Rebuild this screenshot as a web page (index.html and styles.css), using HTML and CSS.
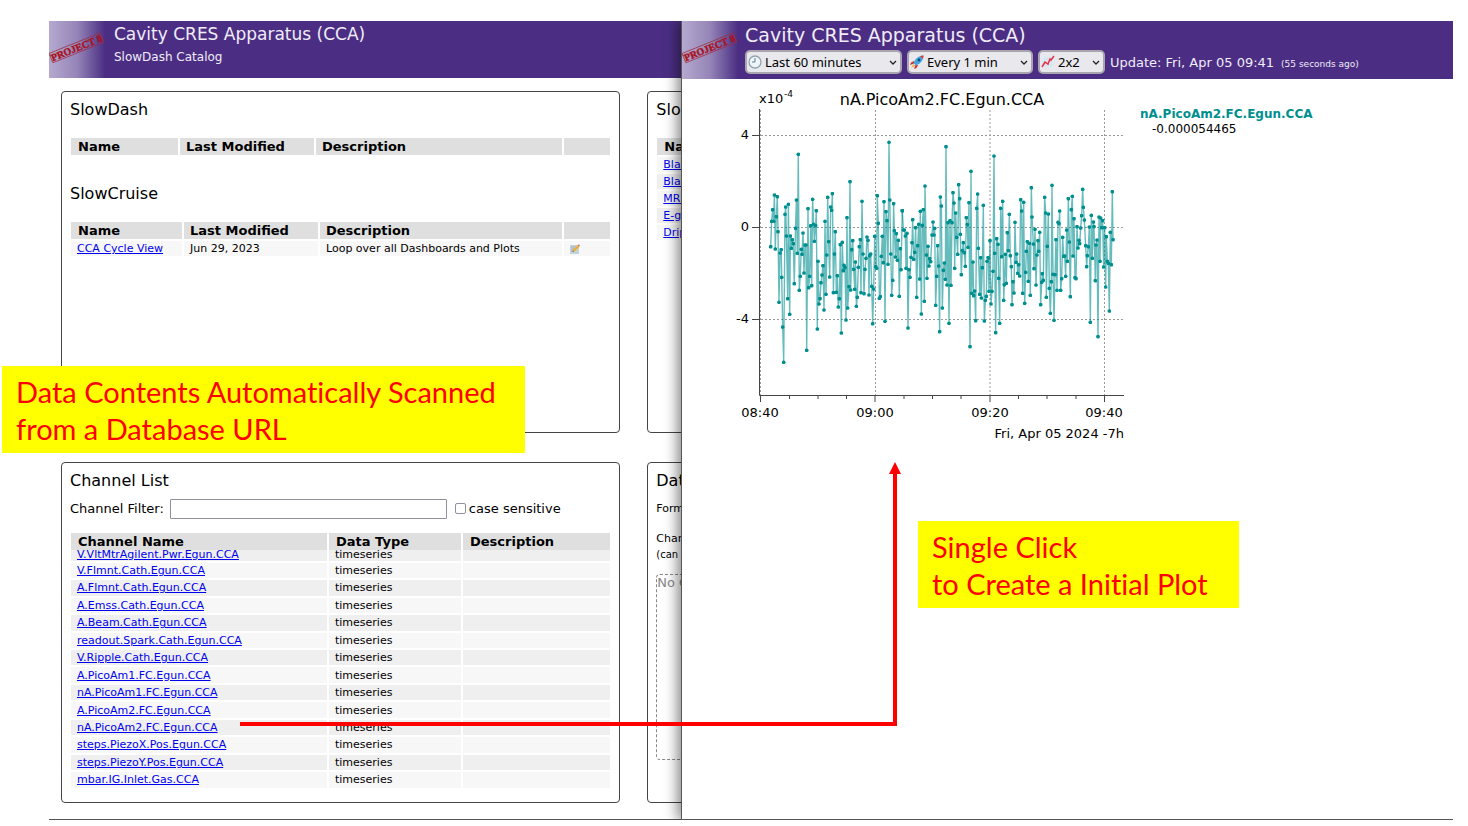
FILE: index.html
```html
<!DOCTYPE html>
<html lang="en">
<head>
<meta charset="utf-8">
<title>SlowDash</title>
<link rel="stylesheet" href="styles.css">
</head>
<body>
<svg class="defs" aria-hidden="true">
  <defs>
    <symbol id="stamp" viewBox="0 0 56 56">
      <g transform="rotate(-22 27 27)">
        <rect x="0" y="22" width="55" height="10" fill="none" stroke="#a02c3c" stroke-width=".7"/>
        <text x="27.500" y="30.500" text-anchor="middle" font-family="Liberation Serif, serif" font-weight="700" font-size="10" fill="#a8121c" stroke="#a8121c" stroke-width=".4">PROJECT 8</text>
      </g>
    </symbol>
    <marker id="dot" viewBox="-2 -2 4 4" markerWidth="2.800" markerHeight="2.800"><circle r="1.900" fill="#008f8f"/></marker>
  </defs>
</svg>
<main class="stage">
  <section class="window catalog">
    <header class="bar">
      <div class="logo"><svg><use href="#stamp"/></svg></div>
      <div class="bar-text">
        <h1 class="title">Cavity CRES Apparatus (CCA)</h1>
        <p class="subtitle">SlowDash Catalog</p>
      </div>
    </header>
    <div class="panels">
      <section class="panel">
        <h2>SlowDash</h2>
        <table class="list dash">
          <thead><tr><th class="c1">Name</th><th class="c2">Last Modified</th><th>Description</th><th class="c4"></th></tr></thead>
        </table>
        <h2 class="second">SlowCruise</h2>
        <table class="list cruise">
          <thead><tr><th class="c1">Name</th><th class="c2">Last Modified</th><th>Description</th><th class="c4"></th></tr></thead>
          <tbody><tr><td><a href="#">CCA Cycle View</a></td><td>Jun 29, 2023</td><td>Loop over all Dashboards and Plots</td><td>
            <svg class="memo" viewBox="0 0 10 10"><path d="M0 1h9v9H0z" fill="#c3d3dc"/><path d="M1 3h5M1 5h4M1 7h3" stroke="#8fa5b3" stroke-width=".7"/><path d="M2.500 8l.7-2.400L7.600 1.200l1.800 1.600L4.800 7.300z" fill="#eeb02e"/><path d="M7.600 1.200L8.600.2l1.400 1.400-.9 1z" fill="#e0637a"/><path d="M2.500 8l.5-1.400.9.8z" fill="#444"/></svg>
          </td></tr></tbody>
        </table>
      </section>
      <section class="panel">
        <h2>SlowPlot</h2>
        <table class="list">
          <thead><tr><th>Name</th></tr></thead>
          <tbody>
            <tr><td><a href="#">Blank</a></td></tr>
            <tr><td><a href="#">Blank</a></td></tr>
            <tr><td><a href="#">MRI</a></td></tr>
            <tr><td><a href="#">E-gun</a></td></tr>
            <tr><td><a href="#">Drip</a></td></tr>
          </tbody>
        </table>
      </section>
      <section class="panel">
        <h2>Channel List</h2>
        <div class="filter">
          <label for="filter">Channel Filter:</label>
          <input id="filter" type="text">
          <input id="case" type="checkbox"><label for="case">case sensitive</label>
        </div>
        <table class="list channels">
          <thead><tr><th class="n1">Channel Name</th><th class="n2">Data Type</th><th>Description</th></tr></thead>
          <tbody>
            <tr class="cut"><td><a href="#">V.VltMtrAgilent.Pwr.Egun.CCA</a></td><td>timeseries</td><td></td></tr>
            <tr><td><a href="#">V.Flmnt.Cath.Egun.CCA</a></td><td>timeseries</td><td></td></tr>
            <tr><td><a href="#">A.Flmnt.Cath.Egun.CCA</a></td><td>timeseries</td><td></td></tr>
            <tr><td><a href="#">A.Emss.Cath.Egun.CCA</a></td><td>timeseries</td><td></td></tr>
            <tr><td><a href="#">A.Beam.Cath.Egun.CCA</a></td><td>timeseries</td><td></td></tr>
            <tr><td><a href="#">readout.Spark.Cath.Egun.CCA</a></td><td>timeseries</td><td></td></tr>
            <tr><td><a href="#">V.Ripple.Cath.Egun.CCA</a></td><td>timeseries</td><td></td></tr>
            <tr><td><a href="#">A.PicoAm1.FC.Egun.CCA</a></td><td>timeseries</td><td></td></tr>
            <tr><td><a href="#">nA.PicoAm1.FC.Egun.CCA</a></td><td>timeseries</td><td></td></tr>
            <tr><td><a href="#">A.PicoAm2.FC.Egun.CCA</a></td><td>timeseries</td><td></td></tr>
            <tr><td><a href="#">nA.PicoAm2.FC.Egun.CCA</a></td><td>timeseries</td><td></td></tr>
            <tr><td><a href="#">steps.PiezoX.Pos.Egun.CCA</a></td><td>timeseries</td><td></td></tr>
            <tr><td><a href="#">steps.PiezoY.Pos.Egun.CCA</a></td><td>timeseries</td><td></td></tr>
            <tr><td><a href="#">mbar.IG.Inlet.Gas.CCA</a></td><td>timeseries</td><td></td></tr>
          </tbody>
        </table>
      </section>
      <section class="panel download">
        <h2>Data</h2>
        <p class="format">Form</p>
        <p class="chan">Chan</p>
        <p class="hint">(can be</p>
        <div class="drop">No Ch</div>
      </section>
    </div>
  </section>

  <section class="window plot">
    <header class="bar">
      <div class="logo"><svg><use href="#stamp"/></svg></div>
      <div class="bar-text">
        <h1 class="title">Cavity CRES Apparatus (CCA)</h1>
        <div class="controls">
          <div class="pick range">
            <svg class="ico" viewBox="0 0 14 14"><circle cx="7" cy="7" r="6" fill="#eef4f7" stroke="#90a4ae" stroke-width="1.300"/><path d="M7 3v4H4" fill="none" stroke="#607d8b"/></svg>
            <select aria-label="Time range"><option>Last 60 minutes</option></select>
            <svg class="chev" viewBox="0 0 8 6"><path d="M1 1l3 3 3-3" fill="none" stroke="#222" stroke-width="1.300"/></svg>
          </div>
          <div class="pick every">
            <svg class="ico" viewBox="0 0 14 14"><path d="M4 6L1 7.500 0 10l4-1.500zM8 10l-1.500 3-2.500 1 1.500-4z" fill="#d32f2f"/><path d="M3.500 8C5 4 8 1 13.500.5 13 6 10 9 6 10.500z" fill="#42a5e0"/><path d="M10 .9L13.500.5l-.4 3.500z" fill="#e53935"/><circle cx="9" cy="5" r="1.400" fill="#174a72"/><path d="M3.500 9L5 10.500 1 13z" fill="#ffa726"/></svg>
            <select aria-label="Update interval"><option>Every 1 min</option></select>
            <svg class="chev" viewBox="0 0 8 6"><path d="M1 1l3 3 3-3" fill="none" stroke="#222" stroke-width="1.300"/></svg>
          </div>
          <div class="pick grid">
            <svg class="ico" viewBox="0 0 14 14"><path d="M1 1h12v12H1z" fill="#e3eef3"/><path d="M1 4h12M1 7h12M1 10h12M4 1v12M7 1v12M10 1v12" stroke="#cadce4" stroke-width=".6"/><path d="M1 12l3-5 3 2 2-5 1 1 3-4" fill="none" stroke="#e8304a" stroke-width="1.500"/></svg>
            <select aria-label="Grid"><option>2x2</option></select>
            <svg class="chev" viewBox="0 0 8 6"><path d="M1 1l3 3 3-3" fill="none" stroke="#222" stroke-width="1.300"/></svg>
          </div>
          <span class="update">Update: Fri, Apr 05 09:41</span>
          <span class="ago">(55 seconds ago)</span>
        </div>
      </div>
    </header>
    <div class="plot-body">
      <svg class="chart" viewBox="682 79 450 370" role="img" aria-label="nA.PicoAm2.FC.Egun.CCA">
        <g fill="none" stroke="#999" stroke-dasharray="2 2">
          <path d="M760.500 110V395M875.500 110V395M990 110V395M1104.500 110V395M761 135.500H1123M761 227.500H1123M761 319.500H1123"/>
        </g>
        <path d="M759.500 109V395.500H1124M752 135.500h8M752 227.500h8M752 319.500h8M760.500 395v7M875 395v7M990 395v7M1104.500 395v7M789.500 395v4M818 395v4M846.500 395v4M904 395v4M932.500 395v4M961 395v4M1018.500 395v4M1047 395v4M1076 395v4" fill="none" stroke="#444"/>
        <g fill="none" stroke="#008f8f" stroke-opacity=".6">
          <polyline class="trace" stroke-width="1.400" points="770.7,246.7 771.6,221.3 772.7,209.7 773.6,221.3 774.4,195 775.3,249 776.3,216.7 777.3,196.7 778,231.7 779,302.3 780,253 781.2,249.7 781.7,277.3 782.7,327 783.7,362.3 785,214.3 785.7,207 786.4,236 787.7,298.7 788.4,204.3 789.7,314.3 790.4,236 791.3,248.3 792.3,239.7 793.3,243.7 794.3,283.7 795.5,228.3 796.4,200 797.3,253.3 798.3,154.3 799.3,290.3 800.2,276.3 801.3,249.3 802,254.3 803,233 804,273 805,245 806,245 806.7,350.3 808,208.7 808.7,287.7 809.7,276.3 810.7,225.7 811.7,285.7 812.6,199.3 813.6,224.3 814.4,241.3 815.6,225.7 816.3,210.7 817.3,329 818,261.3 819,304 820,298.7 821,282.7 822,275 823,265.7 824,310 825,221.3 826,294.3 826.8,255 827.7,197.3 828.6,241.7 829.7,277 830.7,207 831.6,210.3 832.4,193.7 833.4,292.7 834.4,254 835.3,231.7 836.3,292.3 837.3,275.7 838.3,307 839.3,298.7 840.3,244.7 841.3,333 842.3,242.3 843.3,270.7 844,265.3 845,267.7 846,320 847,217.7 847.7,308 849,286.7 850,181.7 850.7,290 851.7,249.7 852.7,240.7 853.7,269.3 854.7,289.3 855.4,262 856.4,306.3 857.3,297.3 858.3,267.3 859.3,246.7 860.3,239.7 861,292.7 862,201.3 863,254 864,293.7 865,269.3 866,258.3 867,237 868,240.3 869,295 869.7,255.7 870.7,254 871.7,286.3 872.7,323.7 873.7,289 874.7,236.3 875.7,266.7 876.6,268.3 877.3,195.7 878.3,223.3 879.4,298.3 880.4,296.7 881.3,256.3 882.3,236.3 883.3,262.7 884,201.7 885,321.3 886,211.7 887,220.7 888,264.3 889,142.3 889.8,200 890.8,254 891.7,295.3 892.7,280.3 893.6,203.7 894.4,230.7 895.4,257 896.4,233.7 897.4,260.3 898.4,240.3 899.3,296.3 900.4,248.7 901,269.7 902.3,210.7"/>
          <polyline class="trace" stroke-width="4.200" transform="translate(860 120) scale(.33333)" points="127,272 130,330 133,330 136,348 138,445 141,340 144,624 147,449 150,472 153,412 156,368 158,299 161,418 164,397 167,323 170,532 173,377 176,313 179,477 181,274 184,582 187,316 190,269 193,544 195,198 199,405 201,475 204,379 207,438 209,416 212,425 216,345 219,306 222,345 224,325 227,556 230,469 233,377 236,438 239,635 241,231 244,258 247,564 250,451 253,429 256,478 258,80 261,495 264,308 267,610 270,302 273,496 276,308 279,218 282,249 284,445 287,279 290,352 293,403 296,194 299,236 301,343 304,464 307,392 310,368 313,398 316,439 319,293 322,314 324,382 327,248 330,680 333,154 335,520 339,426 341,527 344,513 347,602 350,265 353,222 355,385 359,523 362,413 364,534 367,443 370,256 373,603 376,541 379,529 381,424 385,413"/>
          <polyline class="trace" stroke-width="4.200" transform="translate(980 120) scale(.33333)" points="25,413 27,514 30,362 33,552 36,514 39,454 42,108 44,400 47,638 50,356 54,373 56,475 59,610 62,265 65,410 68,244 71,541 73,494 76,403 79,490 82,338 85,392 88,283 91,407 94,440 96,554 99,485 102,519 105,307 108,427 110,402 113,460 116,434 119,468 122,239 125,273 128,520 131,247 134,550 137,457 139,394 142,365 145,484 148,370 151,526 154,203 156,291 160,372 162,446 165,328 168,495 171,405 174,362 176,394 179,337 182,554 185,487 187,461 190,481 194,232 197,279 199,532 202,379 205,282 208,505 211,580 214,485 216,196 219,463 222,601 225,464 228,359 231,511 234,307 237,311 239,273 242,511 245,476 248,352 251,409 254,408 257,469 260,330 262,424 265,236 268,366 271,530 274,269 277,229 279,408 282,296 285,473 288,476 291,320 294,384 297,361 299,371 302,324 305,287 308,208 310,262 313,300 317,377 320,440 322,407 325,380 328,321 331,607 334,286 337,415 340,306 342,320 346,482 348,375 351,360 354,650 357,291 360,424 362,294 365,323 368,302 371,441 374,323 377,501 379,350 382,424 385,430 388,573 391,337 394,434 397,215 399,359"/>
        </g>
        <g class="ticks">
          <text x="759" y="103">x10</text><text class="sup" x="784" y="97">-4</text>
          <text x="749" y="139" text-anchor="end">4</text>
          <text x="749" y="231" text-anchor="end">0</text>
          <text x="749" y="323" text-anchor="end">-4</text>
          <text x="760" y="417" text-anchor="middle">08:40</text>
          <text x="875" y="417" text-anchor="middle">09:00</text>
          <text x="990" y="417" text-anchor="middle">09:20</text>
          <text x="1104" y="417" text-anchor="middle">09:40</text>
          <text x="1124" y="438" text-anchor="end">Fri, Apr 05 2024 -7h</text>
        </g>
        <text class="chart-title" x="942" y="105" text-anchor="middle">nA.PicoAm2.FC.Egun.CCA</text>
      </svg>
      <div class="legend">
        <strong>nA.PicoAm2.FC.Egun.CCA</strong>
        <span>-0.000054465</span>
      </div>
    </div>
  </section>

  <p class="note note-scan">Data Contents Automatically Scanned<br>from a Database URL</p>
  <p class="note note-click">Single Click<br>to Create a Initial Plot</p>
  <svg class="arrow" viewBox="0 0 662 264" aria-hidden="true"><path d="M0 262H655V10" fill="none" stroke="#f00" stroke-width="4"/><path d="M655 0l6 12h-12z" fill="#f00"/></svg>
</main>
</body>
</html>
```

FILE: styles.css
```css
* { box-sizing: border-box; }
body { margin: 0; background: #fff; color: #000; font-family: "DejaVu Sans", sans-serif; font-size: 13px; }
h1, h2, p { margin: 0; font-weight: 400; }
a { color: #00e; }
.defs { position: absolute; width: 0; height: 0; }
.stage { position: relative; min-height: 826px; height: 100vh; overflow: hidden; }

.window { position: absolute; top: 21px; bottom: 6px; right: 15px; display: flex; flex-direction: column; background: #fff; border-bottom: 1px solid #555; }
.catalog { left: 49px; }
.plot { left: 681px; border-left: 1px solid #555; box-shadow: -4px 0 12px rgba(0, 0, 0, .45); clip-path: inset(0 0 0 -20px); }

.bar { display: flex; height: 57px; flex: none; background: #4b2e83; color: #f0ecf8; }
.plot .bar { height: 58px; }
.logo { width: 56px; flex: none; background: linear-gradient(90deg, #b5a9cf, #9585b8 50%, #4b2e83); }
.logo svg { display: block; width: 56px; height: 56px; }
.bar-text { padding-left: 9px; min-width: 0; }
.plot .bar-text { padding-left: 7px; }
.title { font-size: 17px; line-height: 27px; }
.subtitle { font-size: 12px; line-height: 18px; }
.plot .title { font-size: 19px; line-height: 28px; }

.panels { flex: 1; min-height: 0; display: grid; grid-template-columns: 40.5% 40.5%; grid-template-rows: 1fr 1fr; column-gap: 27px; row-gap: 29px; padding: 13px 11px 16px 12px; }
.panel { min-height: 0; border: 1px solid #444; border-radius: 4px; padding: 6px 10px 0 8px; }
.panel h2 { font-size: 16px; line-height: 24px; }
.panel h2.second { margin-top: 27px; }

.list { width: calc(100% + 2px); border-spacing: 0; table-layout: fixed; margin: 16px -1px 0; font-size: 11px; }
.list th, .list td { text-align: left; border-left: 2px solid #fff; }
.list th { background: #dfdfdf; font-size: 13px; line-height: 17px; padding: 0 0 0 7px; }
.list td { background: #f7f7f7; line-height: 15px; height: 17px; padding: 0 0 0 6px; border-top: 2px solid #fff; white-space: nowrap; }
.list tbody tr:nth-child(even) td { background: #efefef; }
.dash .c1 { width: 109px; }
.dash .c2 { width: 136px; }
.cruise .c1 { width: 113px; }
.cruise .c2 { width: 136px; }
.dash th + th, .cruise th + th { padding-left: 6px; }
.list .c4 { width: 48px; }
.memo { display: block; width: 10px; height: 10px; }

.filter { display: flex; align-items: center; height: 20px; margin-top: 6px; }
.filter input[type="text"] { width: 277px; height: 20px; margin: 0 8px 0 6px; border: 1px solid #8f8f9d; border-radius: 1px; }
.filter input[type="checkbox"] { appearance: none; width: 11px; height: 11px; margin: 0 3px 0 0; border: 1px solid #8f8f9d; border-radius: 2px; background: #fff; }
.channels { margin-top: 14px; height: 255px; }
.channels .n1 { width: 258px; }
.channels .n2 { width: 134px; }
.channels tbody tr:nth-child(odd) td { background: #efefef; }
.channels tbody tr:nth-child(even) td { background: #f7f7f7; }
.channels tbody tr.cut td { height: 11px; line-height: 9px; border-top: 0; vertical-align: top; }

.format { font-size: 11px; line-height: 16px; margin-top: 8px; }
.chan { font-size: 11px; line-height: 16px; margin-top: 14px; }
.hint { font-size: 10px; line-height: 16px; }
.drop { height: 186px; margin-top: 11px; border: 1px dashed #888; border-radius: 4px; color: #888; line-height: 16px; }

.controls { display: flex; align-items: center; height: 26px; gap: 5px; white-space: nowrap; }
.pick { position: relative; height: 24px; }
.pick select { appearance: none; width: 100%; height: 24px; padding: 0 0 0 18px; border: 2px solid #a9a5ae; border-radius: 5px; background: #e9e9ed; color: #000; font: 13px "Noto Sans", sans-serif; }
.range { width: 157px; }
.every { width: 126px; }
.grid { width: 67px; }
.ico { position: absolute; left: 3px; top: 5px; width: 14px; height: 14px; }
.chev { position: absolute; right: 5px; top: 10px; width: 8px; height: 6px; }
.update { margin-right: 2px; }
.ago { font-size: 9px; padding-top: 3px; }

.plot-body { display: flex; align-items: flex-start; }
.chart { width: 450px; height: 370px; flex: none; }
.trace { marker: url(#dot); }
.ticks { font-size: 13px; }
.sup { font-size: 9px; }
.chart-title { font-size: 16px; }
.legend { display: flex; flex-direction: column; padding: 28px 0 0 8px; font-size: 12px; line-height: 15px; }
.legend strong { color: #008f8f; }
.legend span { padding-left: 12px; }

.note { position: absolute; background: #ff0; color: #f00; font-family: Lato, sans-serif; font-variant-ligatures: none; font-size: 29px; line-height: 37px; padding: 7px 14px 5px; white-space: nowrap; }
.note-scan { left: 2px; top: 366px; width: 523px; height: 87px; }
.note-click { left: 918px; top: 521px; width: 321px; height: 87px; }
.arrow { position: absolute; left: 240px; top: 462px; width: 662px; height: 264px; }
```
